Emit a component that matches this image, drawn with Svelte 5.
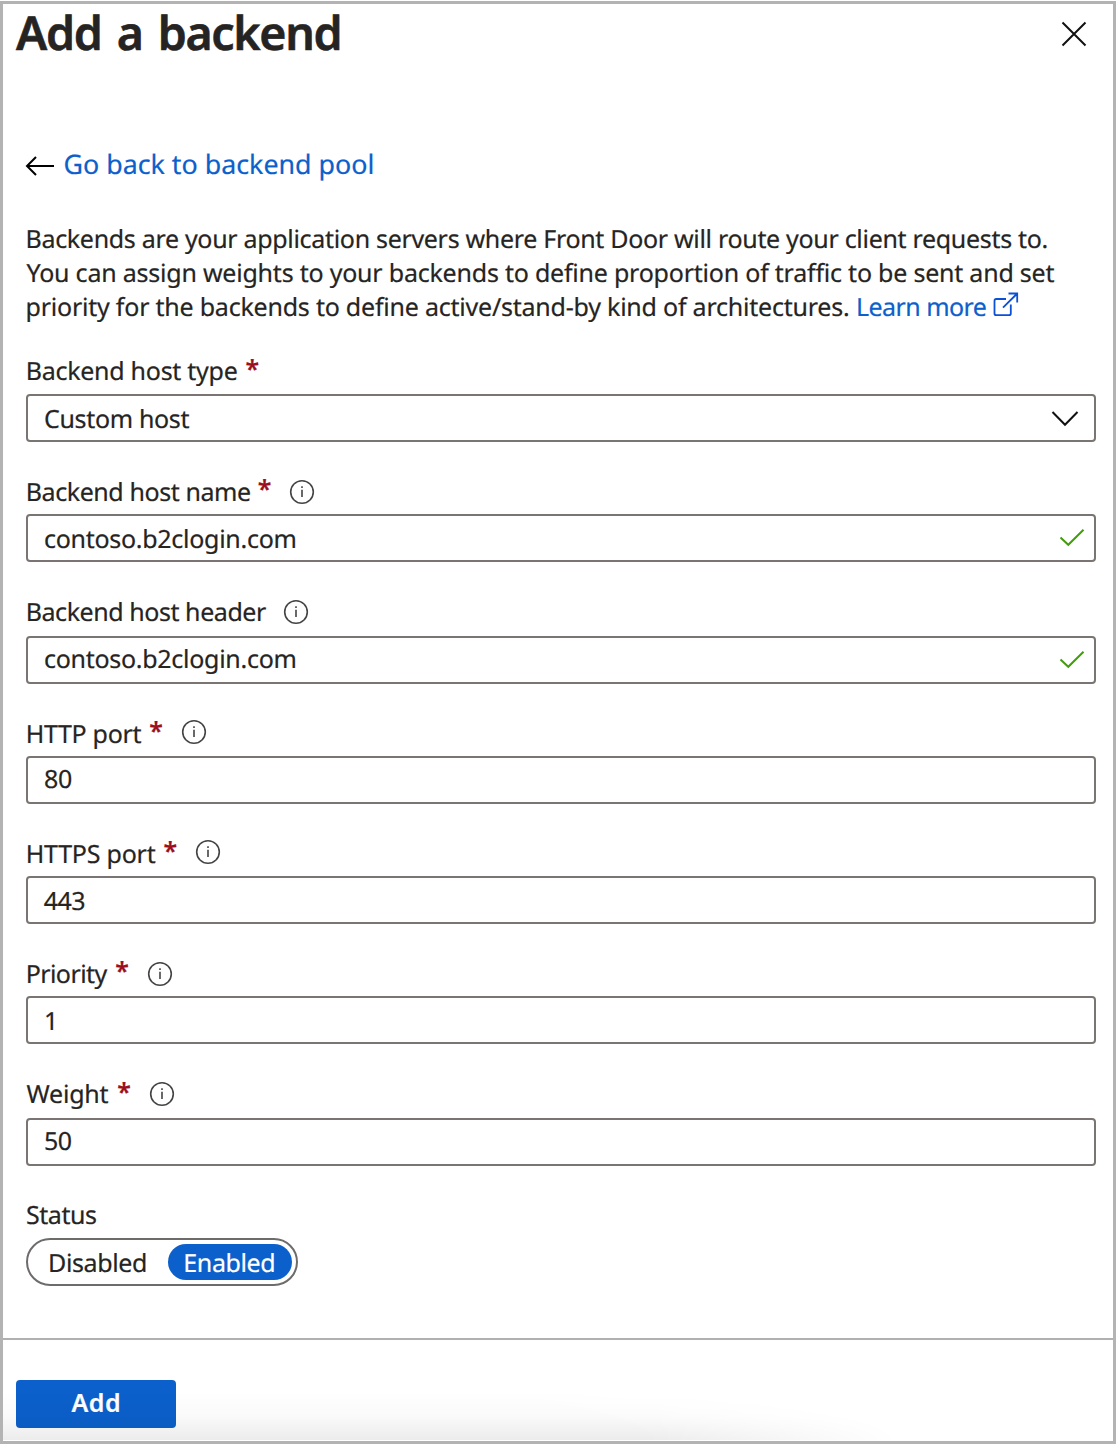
<script>
  const FAMILY = '"Noto Sans", "Open Sans", sans-serif';
  const pen = document.createElement('canvas').getContext('2d');

  // Tracks a run of text so that its ink fills the given width exactly.
  function track(text, width, size = 25, weight = 400, word = 0) {
    pen.font = `${weight} ${size}px ${FAMILY}`;
    const m = pen.measureText(text);
    const ink = m.actualBoundingBoxRight + m.actualBoundingBoxLeft + word * (text.split(' ').length - 1);
    const spacing = text.length > 1 ? (width - ink) / (text.length - 1) : 0;
    return `width:${width}px;letter-spacing:${spacing.toFixed(3)}px;word-spacing:${word}px;text-indent:${m.actualBoundingBoxLeft.toFixed(2)}px`;
  }

  const fields = [
    { label: 'Backend host type', w: 209, star: true, value: 'Custom host', vw: 144.5, kind: 'select', head: 'mid' },
    { label: 'Backend host name', w: 222.3, star: true, info: true, value: 'contoso.b2clogin.com', vw: 250.5, valid: true, raised: true },
    { label: 'Backend host header', w: 238.3, info: true, value: 'contoso.b2clogin.com', vw: 250.5, valid: true, head: 'tall', lift: true },
    { label: 'HTTP port', w: 113.8, star: true, info: true, high: true, value: '80', vw: 27, lift: true, raised: true },
    { label: 'HTTPS port', w: 128, star: true, info: true, high: true, value: '443', vw: 40.5, raised: true, near: true },
    { label: 'Priority', w: 79.8, star: true, info: true, value: '1', vw: 8, raised: true, thin: true },
    { label: 'Weight', w: 82, star: true, info: true, value: '50', vw: 26.8, head: 'tall', lift: true, slant: true }
  ];
</script>

{#snippet run(text, width, size, weight, word)}
  <span class="run" style={track(text, width, size, weight, word)}>{text}</span>
{/snippet}

<main class="panel">
  <header>
    <h1>{@render run('Add a backend', 323.5, 46.5, 650, 4.5)}</h1>
    <button class="close" aria-label="Close">
      <svg width="26" height="26" viewBox="0 0 26 26"><path d="M1.5 1.5 24.5 24.5M24.5 1.5 1.5 24.5" /></svg>
    </button>
  </header>

  <a class="back" href="#pool">
    <svg width="30" height="20" viewBox="0 0 30 20"><path d="M29 10H2M11 1 2 10l9 9" /></svg>
    {@render run('Go back to backend pool', 308, 26.8)}
  </a>

  <div class="intro">
    <div>{@render run('Backends are your application servers where Front Door will route your client requests to.', 1019)}</div>
    <div class="slant">{@render run('You can assign weights to your backends to define proportion of traffic to be sent and set', 1028)}</div>
    <div class="last">
      {@render run('priority for the backends to define active/stand-by kind of architectures.', 820.5)}
      <a href="#learn">
        {@render run('Learn more', 127.8)}
        <svg width="26" height="26" viewBox="0 0 26 26">
          <path d="M13 7H3.2Q1.5 7 1.5 8.7V21.5Q1.5 23.2 3.2 23.2H16Q17.8 23.2 17.8 21.5V12.5M15.5 1.5H24.2V10.5M24.2 1.5 10 15.7" />
        </svg>
      </a>
    </div>
  </div>

  <form>
    {#each fields as f}
      <div class="field">
        <div class="label {f.head ?? ''}" class:slant={f.slant}>
          {@render run(f.label, f.w)}
          {#if f.star}
            <span class="star" class:raised={f.raised}>{@render run('*', 11.4, 25, 600)}</span>
          {/if}
          {#if f.info}
            <svg class="info" class:high={f.high} width="26" height="26" viewBox="0 0 26 26">
              <circle cx="13" cy="13" r="11.3" />
              <path d="M13 10.8V18M13 7.3V9" />
            </svg>
          {/if}
        </div>
        <div class="box" class:lift={f.lift} class:thin={f.thin} class:near={f.near}>
          {@render run(f.value, f.vw)}
          {#if f.kind === 'select'}
            <svg class="chevron" width="28" height="18" viewBox="0 0 28 18"><path d="M1.5 2 14 14.8 26.5 2" /></svg>
          {/if}
          {#if f.valid}
            <svg class="check" width="26" height="20" viewBox="0 0 26 20"><path d="M1.5 9.5 9.3 16.8 24.5 1.7" /></svg>
          {/if}
        </div>
      </div>
    {/each}
    <div class="status">
      {@render run('Status', 69)}
      <div class="toggle">
        <span class="off">{@render run('Disabled', 96)}</span>
        <span class="on">{@render run('Enabled', 89)}</span>
      </div>
    </div>
  </form>

  <footer>
    <button class="add">{@render run('Add', 47.5, 25, 600)}</button>
    <div class="shade"></div>
  </footer>
</main>

<style>
  :global(body) { background: #fff; overflow: hidden; }
  .panel {
    box-sizing: border-box;
    width: 1116px;
    height: 1443px;
    margin-top: 1px;
    border: 3px solid #b3b3b3;
    background: #fff;
    color: #252423;
    font: 25px/34px "Noto Sans", "Open Sans", sans-serif;
    text-rendering: geometricPrecision;
    -webkit-text-stroke: 0.2px currentColor;
    display: flex;
    flex-direction: column;
  }
  .run { display: block; white-space: pre; flex: none; }
  svg { flex: none; display: block; fill: none; stroke: #111; stroke-width: 2; }
  a { color: #0c60cb; text-decoration: none; }
  button { border: 0; padding: 0; margin: 0; background: none; font: inherit; color: inherit; }

  header { display: flex; justify-content: space-between; height: 143px; padding: 0 26px 0 13px; }
  h1 { margin: 0; font-size: 46.5px; line-height: 57px; font-weight: 650; -webkit-text-stroke-width: 0.6px; }
  .close { width: 26px; height: 26px; margin-top: 17px; }

  .back { display: flex; align-items: center; height: 34px; padding-left: 22px; gap: 9.5px; font-size: 26.8px; }
  .back svg { stroke: #000; margin-top: 3px; }

  .intro { padding: 41px 0 0 24.5px; }
  .intro .slant { margin-left: -1px; }
  .intro .last { display: flex; }
  .intro a { display: flex; margin-left: 10px; }
  .intro a svg { margin: 2px 0 0 7.5px; stroke: #0c50d8; stroke-width: 1.8; }

  form { display: flex; flex-direction: column; gap: 32px; padding: 29px 17px 0 23px; }
  .label { box-sizing: border-box; display: flex; height: 40px; padding: 1px 0 0 1.7px; }
  .label.slant { padding-left: 0.5px; }
  .mid { height: 41px; }
  .tall { height: 42px; }
  .star { color: #9b1020; font-weight: 600; margin: -2px 0 0 8.8px; }
  .star.raised { margin: -3px 0 0 7.8px; }
  .info { stroke: #444; stroke-width: 1.6; margin: 4px 0 0 20px; }
  .info.high { margin-top: 2px; }
  .label > .run + .info { margin-left: 17px; }

  .box {
    box-sizing: border-box;
    display: flex;
    justify-content: space-between;
    height: 48px;
    padding: 6px 9px 0 17px;
    border: 2px solid #7a7573;
    border-radius: 4px;
  }
  .thin { padding-left: 18px; }
  .near { padding-left: 15.8px; }
  .lift .run { margin-top: -2px; }
  .chevron { margin: 8px 6px 0 0; }
  .check { stroke: #429c0c; margin-top: 6px; }

  .status { margin-top: -1px; padding-top: 1px; }
  .status > .run { margin-left: 1px; }
  .toggle {
    box-sizing: border-box;
    display: flex;
    width: 272px;
    height: 48px;
    margin-top: 6px;
    padding: 4px;
    border: 2px solid #6e6c6b;
    border-radius: 24px;
    line-height: 38px;
  }
  .off { width: 118px; padding-left: 18px; flex: none; }
  .on { box-sizing: border-box; width: 124px; height: 36px; padding-left: 17.3px; border-radius: 18px; background: #0c60cb; color: #fff; }

  footer { position: relative; flex: 1; margin-top: 52px; border-top: 2px solid #b0b0b0; padding: 40px 0 0 13px; }
  .add { width: 160px; height: 48px; padding: 0 0 4px 55.5px; box-sizing: border-box; border-radius: 4px; background: #0c60cb; color: #fff; font-weight: 600; text-align: left; }
  .shade {
    position: absolute;
    left: 0;
    bottom: 1px;
    width: 895px;
    height: 48px;
    background: linear-gradient(to bottom, rgb(0 0 0 / 0), rgb(0 0 0 / .02) 50%, rgb(0 0 0 / .075));
    mask-image: radial-gradient(ellipse 895px 80px at 0 100%, #000 72%, transparent 100%);
    pointer-events: none;
  }
</style>
